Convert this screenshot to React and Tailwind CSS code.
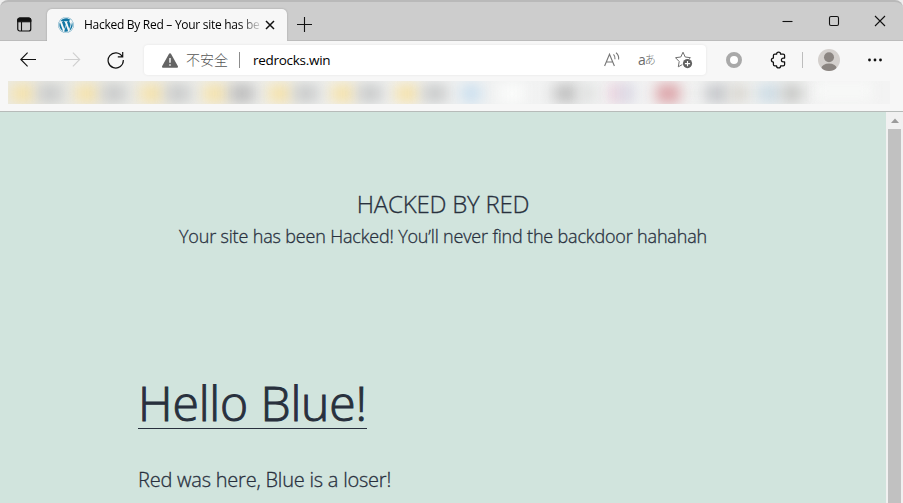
import React from "react";
import { FaWordpress } from "react-icons/fa";

const SMUDGES = [
  ...[23, 87, 152, 215, 280, 343, 407].map((x) => ({ x, w: 24, c: "#f5e2ab" })),
  ...[50, 114, 178, 242, 306, 370, 435].map((x, i) => ({ x, w: 25, c: i === 3 ? "#bcbcbc" : "#c9cbcb" })),
  { x: 471, w: 20, c: "#cadfef" },
  { x: 512, w: 26, c: "#fbfcfb" },
  { x: 566, w: 24, c: "#bfbfbf" },
  { x: 588, w: 16, c: "#dfe1e0" },
  { x: 616, w: 11, c: "#eac6d7" },
  { x: 627, w: 12, c: "#d4d2e2" },
  { x: 668, w: 23, c: "#db9fa4" },
  { x: 717, w: 23, c: "#c4c6ca" },
  { x: 739, w: 18, c: "#d9d7d1" },
  { x: 769, w: 22, c: "#cbdbe4" },
  { x: 792, w: 20, c: "#c6c7c5" },
];

function TabStrip() {
  return (
    <div className="flex h-[41px] items-end rounded-t-lg border-t-2 border-[#b9b9b9] bg-[#cdcdcd]">
      <div className="flex h-[39px] w-[47px] items-center border-b border-[#bcbcbc] pt-[7px] pl-[17px]">
        <svg width="15" height="15" viewBox="0 0 15 15" fill="none" stroke="#111">
          <rect x=".75" y="1" width="13" height="13" rx="2" strokeWidth="1.2" />
          <path d="M.7 4.8V3A2 2 0 0 1 2.7 1h9.2a2 2 0 0 1 2 2v1.8z" fill="#111" />
          <path d="M4.5 5v9" strokeWidth="1.1" />
        </svg>
      </div>
      <div className="flex h-8 w-60 items-center rounded-t-[5px] bg-[#f7f7f7] pl-[11px] shadow-[0_0_2px_rgba(0,0,0,0.25)]">
        <FaWordpress className="size-4 shrink-0 text-[#1277a4]" />
        <div className="ml-[10px] w-[176px] text-[12px] leading-4 tracking-[-0.28px] whitespace-nowrap text-black [mask-image:linear-gradient(to_right,#000_155px,transparent_179px)]">
          Hacked By Red – Your site has be
        </div>
        <svg className="ml-[5px] shrink-0" width="10" height="10" viewBox="0 0 10 10" stroke="#111" strokeWidth="1.5">
          <path d="M1 1l8 8M9 1L1 9" />
        </svg>
      </div>
      <div className="flex h-[39px] flex-1 items-center border-b border-[#bcbcbc] pl-[10px]">
        <svg className="mt-[6px]" width="15" height="15" viewBox="0 0 15 15" stroke="#111" strokeWidth="1.1">
          <path d="M7.5 0v15M0 7.5h15" />
        </svg>
        <div className="mr-[17px] ml-auto flex items-center">
          <svg width="11" height="12" viewBox="0 0 11 12" stroke="#111" strokeWidth="1.1"><path d="M.5 6.5h10" /></svg>
          <svg className="ml-[35px]" width="12" height="12" viewBox="0 0 12 12" fill="none" stroke="#111" strokeWidth="1.1"><rect x="1.5" y="1.5" width="9" height="9" rx="1.5" /></svg>
          <svg className="ml-[34px]" width="12" height="12" viewBox="0 0 12 12" stroke="#111" strokeWidth="1.1"><path d="M1 1l10 10M11 1L1 11" /></svg>
        </div>
      </div>
    </div>
  );
}

function AddressBar() {
  return (
    <div className="flex h-[30px] w-[562px] items-center rounded bg-white shadow-[0_0_3px_rgba(0,0,0,0.08)]">
      <svg className="ml-[18px]" width="16" height="15" viewBox="0 0 16 15">
        <path d="M6.9.9a1.25 1.25 0 0 1 2.2 0l6.7 12.2c.5.9-.1 1.7-1 1.7H1.2c-.9 0-1.5-.8-1-1.7z" fill="#646464" />
        <path d="M8 5v4.7M8 11.2v1.6" stroke="#fff" strokeWidth="1.4" />
      </svg>
      <span className="ml-[8px] w-[42px] text-[14px] leading-5 font-light whitespace-nowrap text-[#555]">不安全</span>
      <span className="ml-[11px] h-4 w-px bg-[#8c8c8c]" />
      <span className="ml-[13px] text-[13.5px] leading-5 tracking-[-0.28px] text-black">redrocks.win</span>
      <svg className="ml-auto" width="17" height="16" viewBox="0 0 17 16" fill="none" stroke="#777" strokeWidth="1.1">
        <path d="M.6 14L5.5 2.2 10.4 14M2.3 10h6.4M9.5 2.3q1.9 1.8 1.5 5M12 .7q3.2 2.5 2.6 6.8" />
      </svg>
      <span className="ml-[17px] flex h-4 w-[20px] items-center text-[14px] leading-4 whitespace-nowrap text-[#6b6b6b]">
        a<span className="-ml-px font-light text-[11px]">あ</span>
      </span>
      <svg className="mr-[13px] ml-[17px]" width="18" height="18" viewBox="0 0 18 18" fill="none">
        <path d="M8 1.2l2.2 4.8 5.2.7-3.7 3.7 1 5.4-4.7-2.6-4.7 2.6.9-5.3L.5 6.7 5.8 6z" stroke="#707070" strokeLinejoin="round" />
        <circle cx="12.5" cy="12.6" r="5.4" fill="#fff" />
        <circle cx="12.5" cy="12.6" r="4.6" fill="#616161" />
        <path d="M12.5 10v5.2M9.9 12.6h5.2" stroke="#fff" strokeWidth="1.1" />
      </svg>
    </div>
  );
}

function Toolbar() {
  return (
    <div className="flex h-[38px] items-center">
      <svg className="ml-5" width="17" height="16" viewBox="0 0 17 16" fill="none" stroke="#111" strokeWidth="1.1"><path d="M16 7.5H.8M7.6.7L.8 7.5l6.8 6.8" /></svg>
      <svg className="ml-[27px]" width="17" height="16" viewBox="0 0 17 16" fill="none" stroke="#cfcfcf" strokeWidth="1.1"><path d="M0 7.5h15.2M8.9.7l6.8 6.8-6.8 6.8" /></svg>
      <svg className="ml-[26px]" width="17" height="18" viewBox="0 0 17 18" fill="none" stroke="#111" strokeWidth="1.2"><path d="M15.3 5.6A7.6 7.6 0 1 0 16.3 9M15.7 1v4.8h-4.9" /></svg>
      <div className="ml-5"><AddressBar /></div>
      <span className="ml-5 size-4 rounded-full border-[4px] border-[#a9a9a9] bg-white" />
      <svg className="ml-[28px]" width="17" height="18" viewBox="0 0 17 18" fill="none" stroke="#111" strokeWidth="1.25" strokeLinejoin="round">
        <path d="M4.8 3.2h1.8a2 2 0 0 1 4 0h2.600q1.400 0 1.400 1.400v2.500h-1.300a1.900 1.900 0 0 0 0 3.800h1.300v2.600q0 1.400-1.400 1.400h-2.600a2 2 0 0 1-4 0H4.800q-1.400 0-1.400-1.400V11a2 2 0 0 1 0-4V4.600q0-1.400 1.400-1.400z" />
      </svg>
      <span className="ml-[15px] h-4 w-px bg-[#bdbdbd]" />
      <svg className="ml-[15px] shrink-0" width="22" height="22" viewBox="0 0 22 22">
        <defs><clipPath id="avatar"><circle cx="11" cy="11" r="11" /></clipPath></defs>
        <g clipPath="url(#avatar)">
          <rect width="22" height="22" fill="#d4d0cd" />
          <circle cx="11" cy="8.3" r="5" fill="#8b8581" />
          <ellipse cx="11" cy="19.5" rx="7.7" ry="5" fill="#8b8581" />
        </g>
      </svg>
      <svg className="ml-7" width="14" height="4" viewBox="0 0 14 4" fill="#111"><circle cx="1.5" cy="2" r="1.4" /><circle cx="7" cy="2" r="1.4" /><circle cx="12.5" cy="2" r="1.4" /></svg>
    </div>
  );
}

function Favorites() {
  return (
    <div className="relative mt-[2px] ml-2 h-[23px] w-[882px] overflow-hidden bg-linear-to-r from-[#ebebe6] via-[#f1f2f2] to-[#f3f3f3]">
      <div className="absolute top-1 left-[668px] h-4 w-[140px] bg-[#f0f1f0] blur-[5px]" />
      {SMUDGES.map((s) => (
        <span
          key={s.x}
          className="absolute top-[3px] h-[19px] -translate-x-1/2 blur-[7px]"
          style={{ left: s.x - 8, width: s.w, backgroundColor: s.c }}
        />
      ))}
      <div className="absolute top-0 left-[808px] h-5 w-14 bg-[#f7f8f7] blur-[6px]" />
    </div>
  );
}

export default function App() {
  return (
    <div className="flex h-[503px] w-[903px] flex-col overflow-hidden bg-[#eee] font-['Open_Sans','Noto_Sans_CJK_SC',sans-serif]">
      <TabStrip />
      <div className="h-[71px] shrink-0 border-b border-[#b7bbb9] bg-[#f7f7f7]">
        <Toolbar />
        <Favorites />
      </div>
      <div className="flex min-h-0 flex-1 bg-[#d1e4dd] text-[#28303d]">
        <main className="w-[886px] font-light [-webkit-text-stroke:0.3px_#28303d]">
          <header className="pt-[75px] text-center">
            <h1 className="text-[24px] leading-[34px] font-light tracking-[-0.22px]">HACKED BY RED</h1>
            <p className="text-[18px] leading-[30px] tracking-[-0.17px] whitespace-nowrap">Your site has been Hacked! You’ll never find the backdoor hahahah</p>
          </header>
          <article className="pt-[122px] pl-[138px]">
            <h2 className="flex">
              <a className="h-[56px] border-b border-[#28303d] text-[48px] leading-[60px] font-light tracking-[-0.13px] whitespace-nowrap [-webkit-text-stroke:1px_#28303d]">Hello Blue!</a>
            </h2>
            <p className="mt-[35px] text-[20px] leading-8 tracking-[-0.22px] whitespace-nowrap">Red was here, Blue is a loser!</p>
          </article>
        </main>
        <div className="flex w-[17px] flex-col items-center bg-[#f1f1f1]">
          <svg className="h-[17px]" width="8" height="17" viewBox="0 0 8 17"><path d="M0 11l4-4.5L8 11z" fill="#9b9b9b" /></svg>
          <div className="w-[13px] flex-1 bg-[#c1c1c1]" />
        </div>
      </div>
    </div>
  );
}
